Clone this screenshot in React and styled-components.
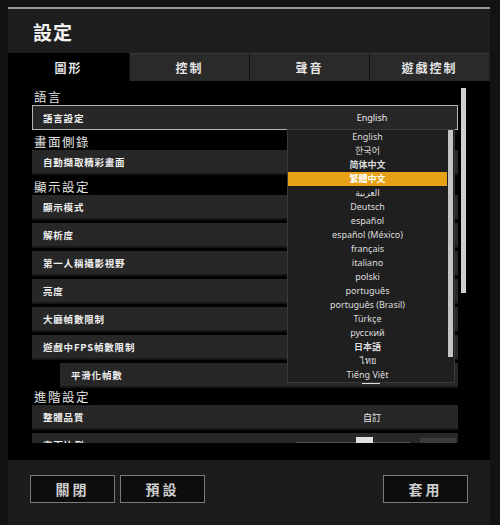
import React from "react";
import styled, { createGlobalStyle } from "styled-components";

const Global = createGlobalStyle`
  html, body {
    margin: 0;
    padding: 0;
    background: #131313;
    font-family: "Noto Sans CJK TC", "Noto Sans", sans-serif;
  }
`;

const Page = styled.div`
  width: 500px;
  height: 525px;
  overflow: hidden;
  background: #131313;
  padding: 7px 0 0 8px;
  box-sizing: border-box;
`;

const Panel = styled.div`
  width: 482px;
  height: 518px;
  background: #1e1e1e;
  border-top: 2px solid #9a9a9a;
  box-sizing: border-box;
  display: flex;
  flex-direction: column;
`;

const Header = styled.div`
  height: 44px;
  display: flex;
  align-items: center;
  padding-left: 25px;
  color: #f2f2f2;
  font-size: 19px;
  font-weight: 700;
  letter-spacing: 1px;
`;

const Tabs = styled.div`
  display: flex;
  height: 28px;
`;

const Tab = styled.div`
  width: ${p => (p.first ? 121 : 120)}px;
  display: flex;
  align-items: center;
  justify-content: center;
  box-sizing: border-box;
  font-size: 12px;
  font-weight: 700;
  letter-spacing: 2px;
  color: #e6e6e6;
  background: ${p => (p.active ? "#000" : "#2a2a2a")};
  border-left: ${p => (p.active ? "none" : "1px solid #111")};
  border-top: ${p => (p.active ? "none" : "1px solid #3a3a3a")};
`;

const Content = styled.div`
  height: 379px;
  background: #000;
  display: flex;
  padding: 4px 0 0 24px;
  box-sizing: border-box;
`;

const Viewport = styled.div`
  position: relative;
  width: 426px;
  height: 358px;
  overflow: hidden;
`;

const ScrollTrack = styled.div`
  margin: 3px 0 0 3px;
  width: 5px;
  height: 205px;
  background: #cfcfcf;
`;

const Heading = styled.div`
  height: ${p => (p.short ? 17 : 20)}px;
  display: flex;
  align-items: flex-end;
  padding-left: 2px;
  color: #e4e4e4;
  font-size: 12.5px;
  letter-spacing: 1.5px;
  line-height: 16px;
`;

const Row = styled.div`
  height: 25px;
  margin-left: ${p => (p.indent ? 28 : 0)}px;
  margin-top: ${p => (p.after ? 3 : 0)}px;
  display: flex;
  align-items: center;
  box-sizing: border-box;
  background: #272727;
  border: 1px solid ${p => (p.focused ? "#b5b5b5" : "#272727")};
  border-bottom: ${p => (p.focused ? "1px solid #b5b5b5" : "2px solid #161616")};
  position: relative;
`;

const Label = styled.div`
  flex: 1;
  padding-left: 10px;
  color: #f0f0f0;
  font-size: 9.5px;
  font-weight: 700;
  letter-spacing: 0.8px;
`;

const Value = styled.div`
  width: 170px;
  text-align: center;
  color: #ececec;
  font-size: 9px;
  font-weight: 400;
  font-family: "Noto Sans", "Noto Sans CJK TC", sans-serif;
`;

const Slider = styled.div`
  width: 114px;
  height: 1px;
  align-self: flex-start;
  margin-top: 8px;
  background: #555;
  position: relative;
`;

const Thumb = styled.div`
  position: absolute;
  left: 60px;
  top: -5px;
  width: 17px;
  height: 8px;
  background: #e0e0e0;
`;

const NumBox = styled.div`
  width: 36px;
  height: 20px;
  margin: 4px 1px 0 10px;
  background: #3c3c3c;
  align-self: flex-start;
`;

const Dropdown = styled.div`
  position: absolute;
  left: 255px;
  top: 44px;
  width: 168px;
  height: 254px;
  box-sizing: border-box;
  background: #1f1f1f;
  border: 1px solid #3a3a3a;
  display: flex;
`;

const Options = styled.div`
  width: 159px;
`;

const Option = styled.div`
  height: 14px;
  line-height: 14px;
  text-align: center;
  font-family: "Noto Sans", "Noto Sans CJK TC", "DejaVu Sans", sans-serif;
  font-size: 9px;
  font-weight: ${p => (p.bold ? 700 : 400)};
  color: ${p => (p.selected ? "#fff" : "#dedede")};
  background: ${p => (p.selected ? "#e6a116" : "transparent")};
  position: relative;
`;

const Underline = styled.span`
  position: absolute;
  left: 74px;
  bottom: -2px;
  width: 18px;
  height: 1px;
  background: #e0e0e0;
`;

const DropScroll = styled.div`
  width: 5px;
  height: 227px;
  margin-left: 1px;
  background: #c4c4c4;
`;

const Footer = styled.div`
  flex: 1;
  display: flex;
  align-items: flex-start;
  padding: 15px 22px 0 22px;
  gap: 5px;
  background: #1c1c1c;
`;

const Button = styled.div`
  width: 85px;
  height: 28px;
  box-sizing: border-box;
  border: 1px solid #7a7a7a;
  background: #0d0d0d;
  color: #cfcfcf;
  font-size: 14px;
  font-weight: 700;
  letter-spacing: 3px;
  display: flex;
  align-items: center;
  justify-content: center;
  margin-left: ${p => (p.push ? "auto" : "0")};
`;

const languages = [
  { t: "English" },
  { t: "한국어" },
  { t: "简体中文", b: true },
  { t: "繁體中文", b: true, s: true },
  { t: "العربية" },
  { t: "Deutsch" },
  { t: "español" },
  { t: "español (México)" },
  { t: "français" },
  { t: "italiano" },
  { t: "polski" },
  { t: "português" },
  { t: "português (Brasil)" },
  { t: "Türkçe" },
  { t: "русский" },
  { t: "日本語", b: true },
  { t: "ไทย" },
  { t: "Tiếng Việt", u: true },
];

const display = ["顯示模式", "解析度", "第一人稱攝影視野", "亮度", "大廳幀數限制", "遊戲中FPS幀數限制"];

export default function App() {
  return (
    <Page>
      <Global />
      <Panel>
        <Header>設定</Header>
        <Tabs>
          <Tab first active>圖形</Tab>
          <Tab>控制</Tab>
          <Tab>聲音</Tab>
          <Tab>遊戲控制</Tab>
        </Tabs>
        <Content>
          <Viewport>
            <Heading>語言</Heading>
            <Row focused>
              <Label>語言設定</Label>
              <Value>English</Value>
            </Row>
            <Heading>畫面側錄</Heading>
            <Row>
              <Label>自動擷取精彩畫面</Label>
            </Row>
            <Heading>顯示設定</Heading>
            {display.map((d, i) => (
              <Row key={d} after={i > 0}>
                <Label>{d}</Label>
              </Row>
            ))}
            <Row indent after>
              <Label>平滑化幀數</Label>
            </Row>
            <Heading short>進階設定</Heading>
            <Row>
              <Label>整體品質</Label>
              <Value>自訂</Value>
            </Row>
            <Row after>
              <Label>畫面比例</Label>
              <Slider>
                <Thumb />
              </Slider>
              <NumBox />
            </Row>

            <Dropdown>
              <Options>
                {languages.map(l => (
                  <Option key={l.t} bold={l.b} selected={l.s}>
                    {l.t}
                    {l.u && <Underline />}
                  </Option>
                ))}
              </Options>
              <DropScroll />
            </Dropdown>
          </Viewport>
          <ScrollTrack />
        </Content>
        <Footer>
          <Button>關閉</Button>
          <Button>預設</Button>
          <Button push>套用</Button>
        </Footer>
      </Panel>
    </Page>
  );
}
